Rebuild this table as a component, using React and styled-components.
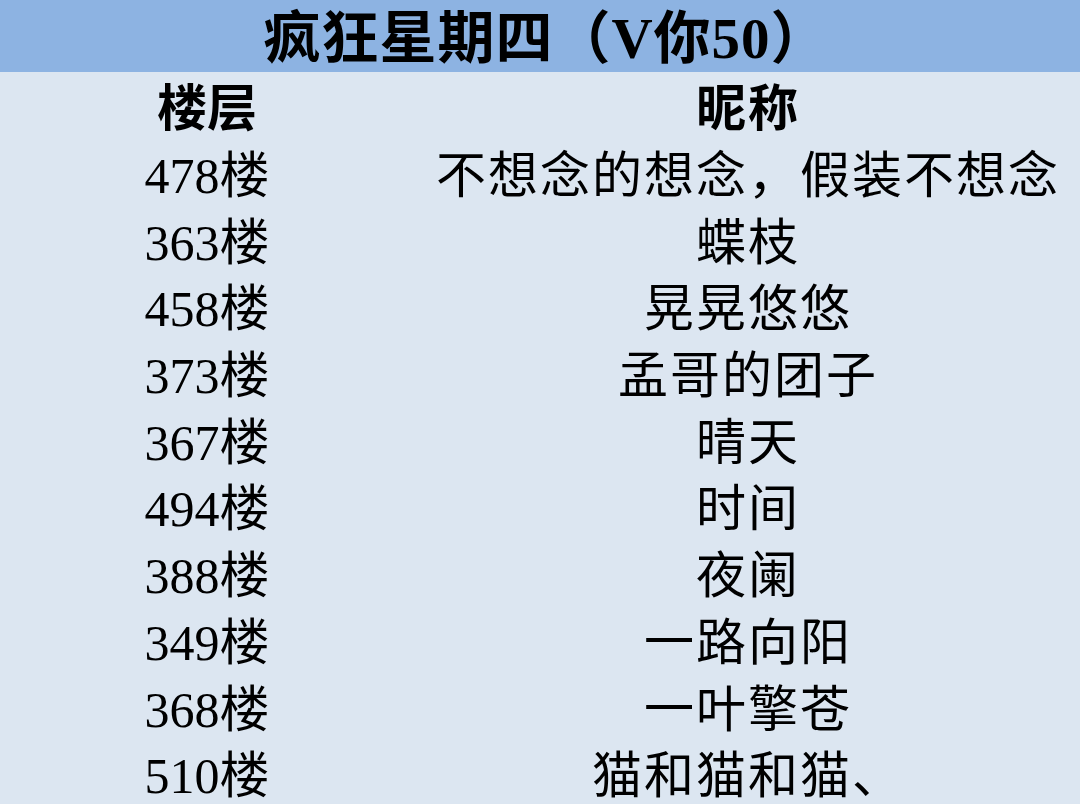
import React from "react";
import styled, { createGlobalStyle } from "styled-components";

const Global = createGlobalStyle`
  html, body { margin: 0; padding: 0; background: #dce6f1; }
  body { width: 1080px; height: 804px; overflow: hidden; }
`;

const FONT = `"Liberation Serif", "Noto Sans CJK SC", serif`;

const Sheet = styled.div`
  width: 1080px;
  height: 804px;
  background: #dce6f1;
  font-family: ${FONT};
  color: #000;
  overflow: hidden;
  display: flex;
  flex-direction: column;
`;

const TitleBar = styled.div`
  height: 72px;
  flex: 0 0 72px;
  box-sizing: border-box;
  background: #8db3e2;
  display: flex;
  align-items: center;
  justify-content: center;
  padding: 4px 0 0 12px;
  font-size: 57px;
  font-weight: 700;
  line-height: 1;
  letter-spacing: 1px;
`;

const Table = styled.div`
  padding-top: 4px;
  display: grid;
  grid-template-columns: 414px 1fr;
  grid-auto-rows: 66.7px;
`;

const Cell = styled.div`
  display: flex;
  align-items: center;
  justify-content: center;
  font-size: 50px;
  font-weight: ${(p) => (p.$head ? 700 : 400)};
  letter-spacing: ${(p) => (p.$wide ? "2px" : "0")};
  padding-left: ${(p) => (p.$wide ? "2px" : "0")};
  line-height: 1;
  white-space: nowrap;
`;

const rows = [
  ["478", "不想念的想念，假装不想念"],
  ["363", "蝶枝"],
  ["458", "晃晃悠悠"],
  ["373", "孟哥的团子"],
  ["367", "晴天"],
  ["494", "时间"],
  ["388", "夜阑"],
  ["349", "一路向阳"],
  ["368", "一叶擎苍"],
  ["510", "猫和猫和猫、"],
];

export default function App() {
  return (
    <Sheet>
      <Global />
      <TitleBar>疯狂星期四（V你50）</TitleBar>
      <Table>
        <Cell $head>楼层</Cell>
        <Cell $head $wide>昵称</Cell>
        {rows.map(([f, n]) => (
          <React.Fragment key={f}>
            <Cell>{f}楼</Cell>
            <Cell $wide>{n}</Cell>
          </React.Fragment>
        ))}
      </Table>
    </Sheet>
  );
}
